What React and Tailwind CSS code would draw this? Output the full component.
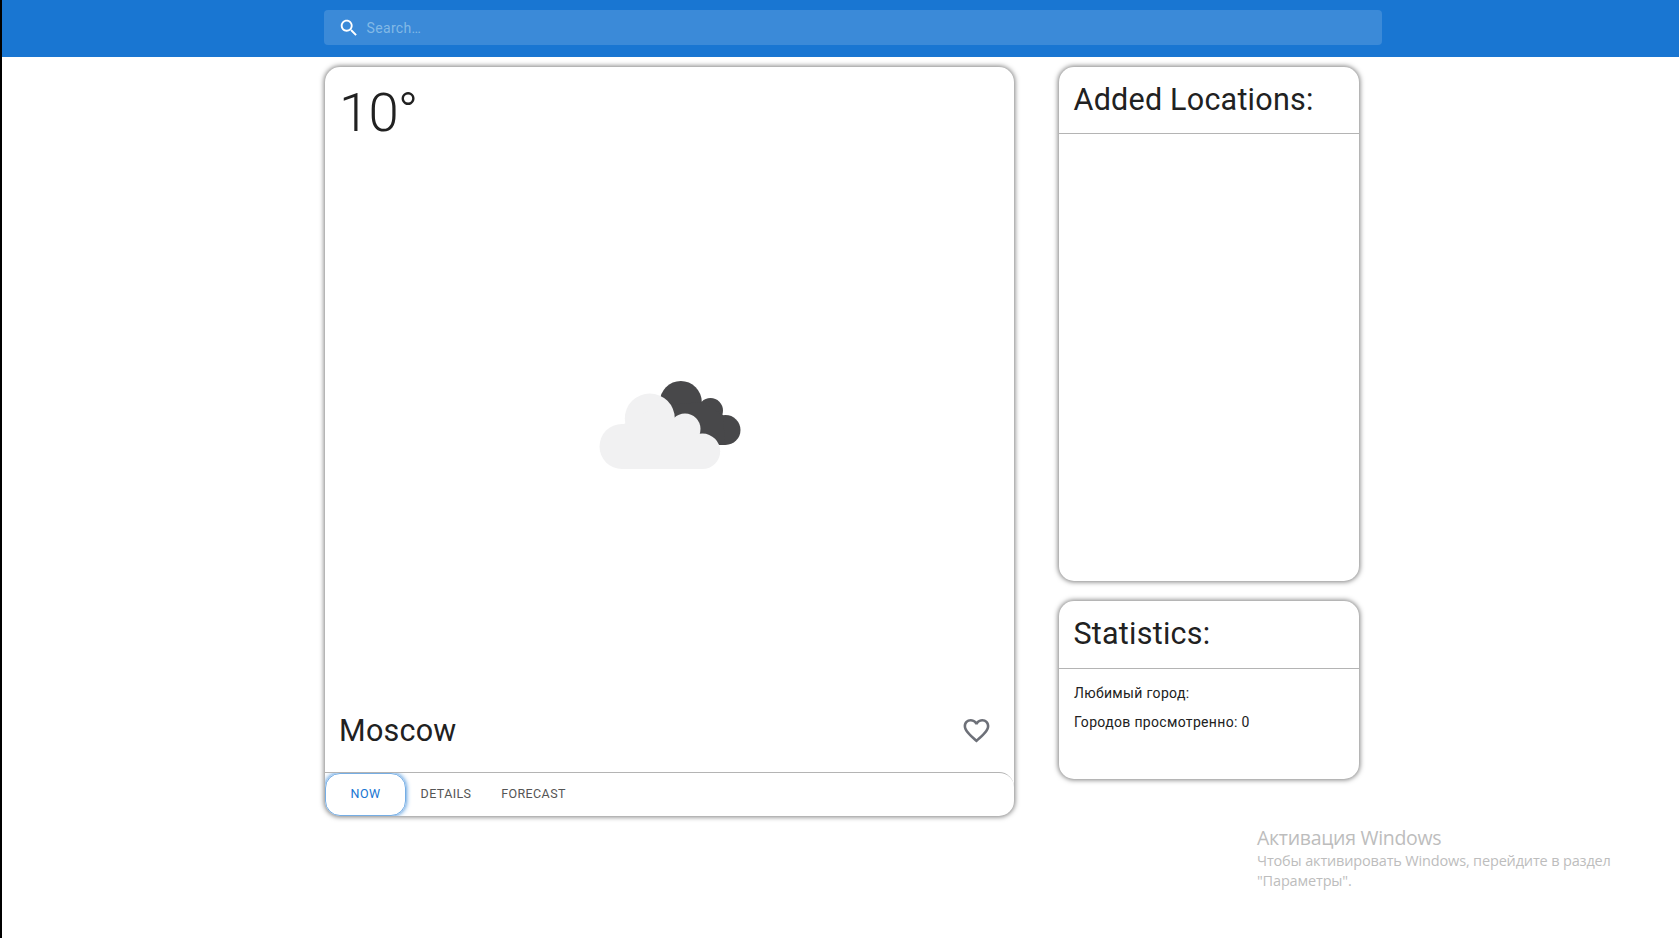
import React from "react";

const card =
  "flex flex-col rounded-[15px] bg-white shadow-[0_0_5px_1px_rgba(0,0,0,0.5)]";

function SearchBar() {
  return (
    <header className="flex h-[57px] bg-[#1976d2] pl-[322px] pt-[10px]">
      <div className="flex h-[35px] w-[1058px] items-center rounded bg-white/15 pl-[14px]">
        <svg className="size-[22px] shrink-0 fill-white" viewBox="0 0 24 24">
          <path d="M15.5 14h-.79l-.28-.27C15.41 12.59 16 11.11 16 9.5 16 5.91 13.09 3 9.5 3S3 5.91 3 9.5 5.91 16 9.5 16c1.61 0 3.09-.59 4.23-1.57l.27.28v.79l5 4.99L20.49 19l-4.99-5zm-6 0C7.01 14 5 11.99 5 9.5S7.01 5 9.5 5 14 7.01 14 9.5 11.99 14 9.5 14z" />
        </svg>
        <span className="ml-[6.5px] text-[14px] leading-5 tracking-[0.35px] text-[#82b9e6]">Search…</span>
      </div>
    </header>
  );
}

function Clouds() {
  return (
    <svg className="h-[90px] w-[144px]" viewBox="0 0 144 90">
      <g fill="#48484a">
        <circle cx="81.800" cy="22" r="21" />
        <circle cx="111.500" cy="30.5" r="12.5" />
        <circle cx="126.5" cy="50" r="15" />
        <path d="M70 25 L103 22 L124 35 L126 65 H100 Z" />
      </g>
      <g fill="#f1f1f2">
        <circle cx="23" cy="66.5" r="22.5" />
        <circle cx="50.800" cy="38.5" r="25" />
        <circle cx="86" cy="49" r="15.5" />
        <circle cx="103.500" cy="71.300" r="17.7" />
        <path d="M23 45 L51 30 L100 50 L103.500 89 H23 Z" />
      </g>
    </svg>
  );
}

function WeatherCard() {
  return (
    <main className={`${card} h-[749px] w-[689px]`}>
      <div className="px-[14px] pt-[12px] text-[54.5px] font-light leading-[67px] tracking-[-0.8px]">10°</div>
      <div className="flex flex-1 pl-[274px] pt-[234px]">
        <Clouds />
      </div>
      <div className="flex h-[84px] items-center justify-between pl-[14px] pr-[22px]">
        <h1 className="pt-[2px] text-[30.5px] leading-10 tracking-[0.25px]">Moscow</h1>
        <svg className="size-[31px] fill-[#6d7078]" viewBox="0 0 24 24">
          <path d="M16.500 3c-1.740 0-3.410.81-4.500 2.090C10.910 3.810 9.240 3 7.500 3 4.420 3 2 5.420 2 8.500c0 3.780 3.400 6.860 8.550 11.540L12 21.350l1.450-1.320C18.600 15.360 22 12.280 22 8.500 22 5.420 19.580 3 16.500 3zm-4.400 15.550-.1.100-.1-.1C7.140 14.240 4 11.390 4 8.500 4 6.500 5.500 5 7.500 5c1.540 0 3.040.99 3.570 2.360h1.870C13.460 5.990 14.960 5 16.500 5c2 0 3.500 1.500 3.500 3.500 0 2.890-3.140 5.740-7.900 10.050z" />
        </svg>
      </div>
      <nav className="flex h-[44px] overflow-hidden rounded-[15px] rounded-tl-none border-t border-[#b4b4b4] text-[12.5px] tracking-[0.4px] text-[#555]">
        <button className="w-[81px] rounded-[15px] border border-[#1976d2]/60 text-[#1976d2] shadow-[0_0_5px_0_#1976d2]">NOW</button>
        <button className="w-[80px]">DETAILS</button>
        <button className="w-[95px]">FORECAST</button>
      </nav>
    </main>
  );
}

function PanelTitle({ children }) {
  return (
    <h2 className="border-b border-[#b4b4b4] pl-[14.5px] pt-[13px] text-[30.5px] leading-10 tracking-[0.23px]">
      {children}
    </h2>
  );
}

export default function App() {
  return (
    <div className="relative h-[938px] overflow-hidden border-l-2 border-black bg-white font-[Roboto,sans-serif] text-[#212121]">
      <SearchBar />
      <div className="flex gap-[45px] pl-[323px] pt-[10px]">
        <WeatherCard />
        <aside className="flex w-[300px] flex-col gap-5">
          <section className={`${card} h-[514px]`}>
            <PanelTitle><span className="block h-[53px]">Added Locations:</span></PanelTitle>
          </section>
          <section className={`${card} h-[178px]`}>
            <PanelTitle><span className="block h-[54px]">Statistics:</span></PanelTitle>
            <div className="flex flex-col gap-[9px] pl-[15px] pt-[14px] text-[14px] leading-5 tracking-[0.33px]">
              <p>Любимый город:</p>
              <p>Городов просмотренно: 0</p>
            </div>
          </section>
        </aside>
      </div>
      <div className="absolute left-[1255px] top-[824px] whitespace-nowrap font-['Open_Sans',sans-serif] text-[#bdbdbd]">
        <p className="text-[19.5px] leading-[27px] tracking-[-0.3px]">Активация Windows</p>
        <p className="text-[14.5px] leading-5 tracking-[-0.16px]">
          Чтобы активировать Windows, перейдите в раздел
          <br />
          "Параметры".
        </p>
      </div>
    </div>
  );
}
